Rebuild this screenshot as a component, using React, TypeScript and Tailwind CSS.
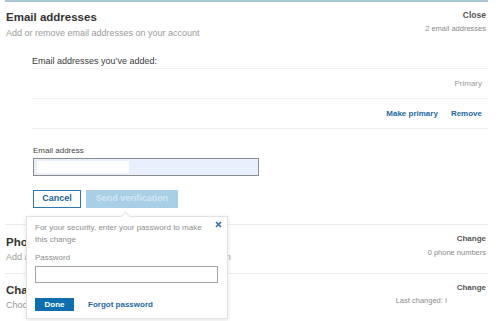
const FONT = "font-['Liberation_Sans',Arial,sans-serif]";

type SectionProps = {
  title: string;
  subtitle: string;
  action: string;
  meta: string;
  metaClassName?: string;
  padTop: string;
};

function CollapsedSection({ title, subtitle, action, meta, metaClassName, padTop }: SectionProps) {
  return (
    <section className="flex h-[49px] justify-between border-t border-[#ececec] pl-[1px] pr-[2px]">
      <div className={padTop}>
        <h2 className="text-[11.5px] leading-[14px] font-bold text-[#333]">{title}</h2>
        <p className="mt-[2px] text-[9px] leading-[12px] text-[#9a9a9a]">{subtitle}</p>
      </div>
      <div className="pt-[8px] text-right">
        <div className="text-[8px] leading-[12px] font-bold text-[#555]">{action}</div>
        <div className={`text-[7.5px] leading-[10px] text-[#8a8a8a] ${metaClassName ?? "mt-[3px]"}`}>
          {meta}
        </div>
      </div>
    </section>
  );
}

function PasswordPopover() {
  return (
    <div className="absolute top-[216px] left-[26px] h-[103px] w-[202px] border border-[#e2e2e2] bg-white shadow-[0_1px_4px_rgba(0,0,0,0.12)]">
      <div className="absolute -top-[4px] left-[95px] h-[7px] w-[7px] rotate-45 border-t border-l border-[#e2e2e2] bg-white" />
      <button type="button" aria-label="Close" className="absolute top-[4px] right-[5px] text-[#2f6fa8]">
        <svg width="7" height="7" viewBox="0 0 7 7" fill="none" aria-hidden="true">
          <path d="M1 1L6 6M6 1L1 6" stroke="currentColor" strokeWidth="1.6" />
        </svg>
      </button>
      <div className="pt-[5px] pl-[8px]">
        <p className="w-[176px] text-[8px] leading-[12px] text-[#8d8d8d]">
          For your security, enter your password to make this change
        </p>
        <div className="mt-[6px] text-[8px] leading-[12px] text-[#8d8d8d]">Password</div>
        <div className="mt-[2px] h-[17px] w-[183px] border border-[#a3a3a3] bg-white" />
        <div className="mt-[15px] flex items-center">
          <button
            type="button"
            className="h-[13px] w-[39px] bg-[#0f6fae] text-[8px] leading-[13px] font-bold text-white"
          >
            Done
          </button>
          <button type="button" className="ml-[14px] text-[8px] leading-[13px] font-bold text-[#1f68a1]">
            Forgot password
          </button>
        </div>
      </div>
    </div>
  );
}

export default function App() {
  return (
    <div className={`relative h-[321px] w-[500px] overflow-hidden bg-white ${FONT}`}>
      <div className="ml-[5px] w-[483px] border-t-2 border-[#a9c7d4]">
        <section className="flex justify-between pl-[1px] pr-[2px]">
          <div className="pt-[8px]">
            <h2 className="text-[11.5px] leading-[14px] font-bold text-[#333]">Email addresses</h2>
            <p className="mt-[3px] text-[9px] leading-[12px] text-[#9a9a9a]">
              Add or remove email addresses on your account
            </p>
          </div>
          <div className="pt-[7px] text-right">
            <div className="text-[8.5px] leading-[12px] font-bold text-[#555]">Close</div>
            <div className="mt-[3px] text-[7.5px] leading-[10px] text-[#8a8a8a]">2 email addresses</div>
          </div>
        </section>

        <div className="ml-[27px]">
          <p className="mt-[16px] mb-[1px] text-[9px] leading-[12px] text-[#3a3a3a]">
            Email addresses you&#8217;ve added:
          </p>
          <div className="border-b border-[#efefef]">
            <div className="flex h-[30px] items-center justify-end border-t border-[#efefef] pr-[6px]">
              <span className="text-[8px] text-[#9a9a9a]">Primary</span>
            </div>
            <div className="flex h-[30px] items-center justify-end gap-[13px] border-t border-[#efefef] pr-[6px]">
              <button type="button" className="text-[8px] font-bold text-[#1f68a1]">Make primary</button>
              <button type="button" className="text-[8px] font-bold text-[#1f68a1]">Remove</button>
            </div>
          </div>
        </div>

        <div className="ml-[28px]">
          <label className="mt-[16px] block text-[8px] leading-[11px] text-[#444]">Email address</label>
          <div className="mt-[2px] flex h-[18px] w-[226px] items-center border border-[#8c8c8c] bg-[#e8f0fe] pl-[3px]">
            <div className="h-[12px] w-[92px] bg-white" />
          </div>
          <div className="mt-[14px] flex gap-[5px]">
            <button
              type="button"
              className="h-[18px] w-[48px] border border-[#2b78b3] bg-white text-[9px] font-bold text-[#1d5f92]"
            >
              Cancel
            </button>
            <button
              type="button"
              className="h-[18px] w-[92px] bg-[#a9cfe6] text-[9px] font-bold text-[#d3e6f2]"
            >
              Send verification
            </button>
          </div>
        </div>

        <div className="mt-[16px]">
          <CollapsedSection
            title="Phone numbers"
            subtitle="Add a phone number in case you have trouble signing in"
            action="Change"
            meta="0 phone numbers"
            padTop="pt-[10px]"
          />
          <CollapsedSection
            title="Change password"
            subtitle="Choose a unique password to protect your account"
            action="Change"
            meta="Last changed: I"
            metaClassName="mt-[2px] mr-[39px]"
            padTop="pt-[9px]"
          />
        </div>
      </div>

      <PasswordPopover />
    </div>
  );
}
